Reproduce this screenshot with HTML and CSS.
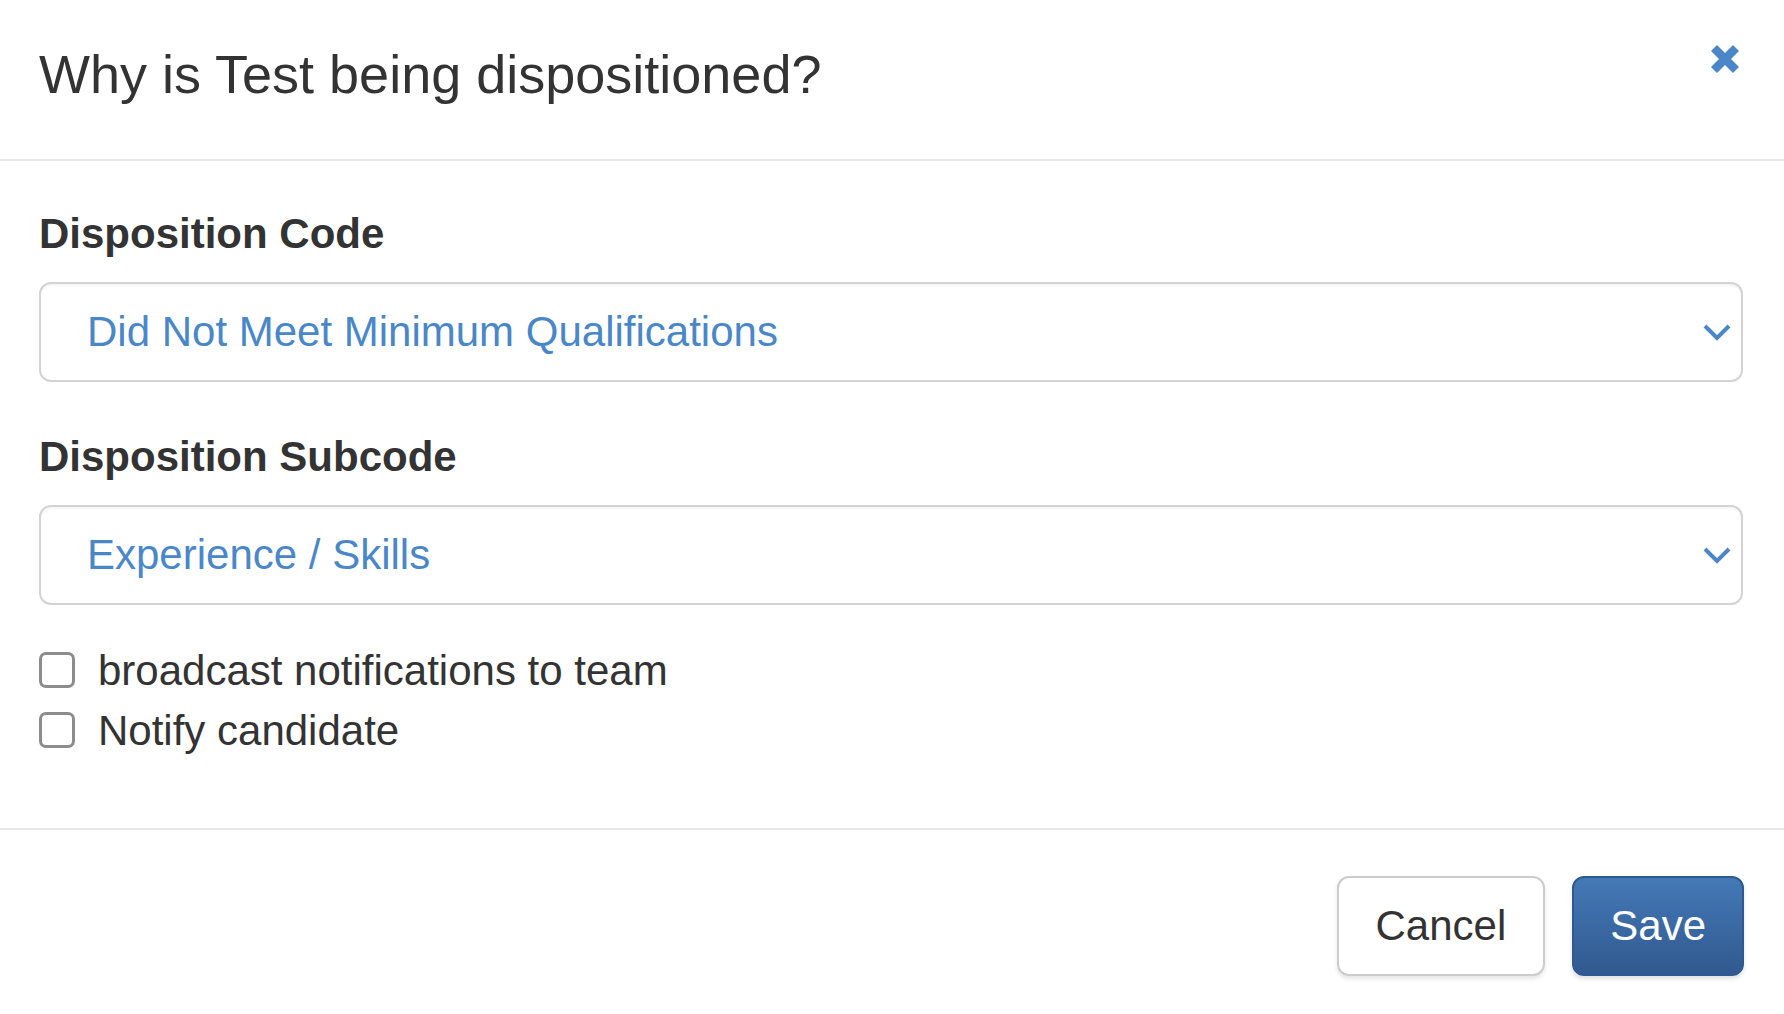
FILE: index.html
```html
<!DOCTYPE html>
<html lang="en">
<head>
<meta charset="utf-8">
<title>Disposition</title>
<link rel="stylesheet" href="styles.css">
</head>
<body>
<div class="modal">
  <div class="modal-header">
    <h4 class="modal-title">Why is Test being dispositioned?</h4>
    <button class="close" type="button" aria-label="Close">
      <svg width="32" height="32" viewBox="0 0 32 32"><path d="M5 5 L27 27 M27 5 L5 27" stroke="#4a86c8" stroke-width="8.5" fill="none"/></svg>
    </button>
  </div>
  <div class="modal-body">
    <div class="form-group">
      <label class="field-label">Disposition Code</label>
      <div class="select">
        <span class="select-value">Did Not Meet Minimum Qualifications</span>
        <svg class="chevron" width="28" height="18" viewBox="0 0 28 18"><path d="M2 2 L14 14 L26 2" stroke="#4a86c8" stroke-width="4" fill="none"/></svg>
      </div>
    </div>
    <div class="form-group">
      <label class="field-label">Disposition Subcode</label>
      <div class="select">
        <span class="select-value">Experience / Skills</span>
        <svg class="chevron" width="28" height="18" viewBox="0 0 28 18"><path d="M2 2 L14 14 L26 2" stroke="#4a86c8" stroke-width="4" fill="none"/></svg>
      </div>
    </div>
    <div class="checks">
      <label class="check"><span class="box"></span><span class="check-text">broadcast notifications to team</span></label>
      <label class="check"><span class="box"></span><span class="check-text">Notify candidate</span></label>
    </div>
  </div>
  <div class="modal-footer">
    <button class="btn btn-default" type="button">Cancel</button>
    <button class="btn btn-primary" type="button">Save</button>
  </div>
</div>
</body>
</html>
```
FILE: styles.css
```css
html, body {
  margin: 0;
  padding: 0;
  background: #ffffff;
}
body {
  font-family: "Liberation Sans", Arial, Helvetica, sans-serif;
  color: #333333;
  font-size: 42px;
  line-height: 60px;
}
.modal {
  width: 1784px;
  min-height: 1014px;
  background: #ffffff;
}
.modal-header {
  display: flex;
  justify-content: space-between;
  align-items: flex-start;
  padding: 45px 43px 55px 39px;
  border-bottom: 2px solid #e8e8e8;
}
.modal-title {
  margin: 0;
  font-size: 54px;
  font-weight: normal;
  line-height: 59px;
  color: #333333;
}
.close {
  margin: -2px 0 0 0;
  padding: 0;
  border: 0;
  background: transparent;
  width: 32px;
  height: 32px;
  display: flex;
  cursor: pointer;
}
.modal-body {
  padding: 43px 41px 0 39px;
}
.form-group {
  margin-bottom: 45px;
}
.field-label {
  display: block;
  font-weight: bold;
  margin-bottom: 18px;
  line-height: 60px;
}
.select {
  height: 100px;
  box-sizing: border-box;
  border: 2px solid #d3d3d3;
  border-radius: 12px;
  display: flex;
  align-items: center;
  justify-content: space-between;
  padding: 0 10px 0 46px;
  box-shadow: inset 0 2px 2px rgba(0,0,0,0.04);
}
.select-value {
  color: #4a87c9;
}
.chevron {
  display: block;
  margin-top: 2px;
}
.checks {
  margin-top: -9px;
  padding-bottom: 67px;
}
.check {
  display: flex;
  align-items: center;
  height: 60px;
}
.box {
  width: 36px;
  height: 36px;
  box-sizing: border-box;
  border: 3px solid #8c8c8c;
  border-radius: 7px;
  margin-right: 23px;
  margin-top: -2px;
  flex: none;
}
.check-text {
  color: #333333;
}
.modal-footer {
  display: flex;
  justify-content: flex-end;
  gap: 27px;
  border-top: 2px solid #e8e8e8;
  padding: 46px 40px 37px 0;
}
.btn {
  font-family: inherit;
  font-size: 42px;
  height: 100px;
  line-height: 96px;
  padding: 0 37px;
  border-radius: 12px;
  border: 2px solid #cccccc;
  cursor: pointer;
}
.btn-default {
  background: #ffffff;
  color: #333333;
  box-shadow: 0 3px 4px rgba(0,0,0,0.1);
}
.btn-primary {
  background: linear-gradient(to bottom, #4479b7 0%, #31598f 100%);
  border-color: #2e5a91;
  color: #ffffff;
  padding: 0 36px;
  box-shadow: 0 3px 4px rgba(0,0,0,0.12);
}
```
